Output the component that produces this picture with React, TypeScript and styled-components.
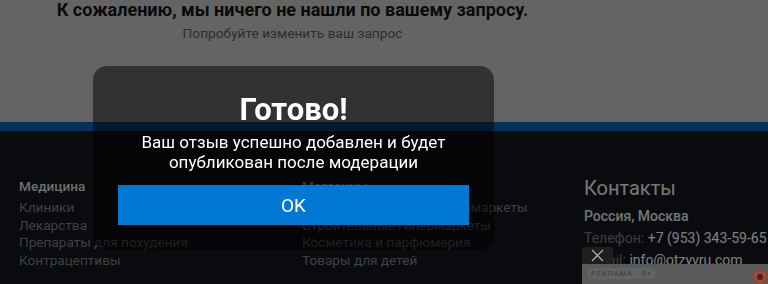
import styled, { createGlobalStyle } from "styled-components";

const GlobalStyle = createGlobalStyle`
  html, body {
    margin: 0;
    padding: 0;
    width: 768px;
    height: 284px;
    overflow: hidden;
    font-family: Roboto, "Liberation Sans", Arial, sans-serif;
    background: #c8c8c8;
  }
`;

const footerColumns = [
  {
    title: "Медицина",
    links: ["Клиники", "Лекарства", "Препараты для похудения", "Контрацептивы"],
  },
  {
    title: "Магазины",
    links: [
      "Продуктовые сети и супермаркеты",
      "Строительные гипермаркеты",
      "Косметика и парфюмерия",
      "Товары для детей",
    ],
  },
];

const App = () => {
  return (
    <>
      <GlobalStyle />
      <Page>
        <Results>
          <EmptyTitle>К сожалению, мы ничего не нашли по вашему запросу.</EmptyTitle>
          <EmptyHint>Попробуйте изменить ваш запрос</EmptyHint>
        </Results>
        <Stripe />
        <Footer>
          {footerColumns.map((col) => (
            <FooterColumn key={col.title}>
              <ColumnTitle>{col.title}</ColumnTitle>
              {col.links.map((link) => (
                <FooterLink key={link}>{link}</FooterLink>
              ))}
            </FooterColumn>
          ))}
          <FooterColumn>
            <ContactsTitle>Контакты</ContactsTitle>
            <City>Россия, Москва</City>
            <ContactRow>
              <ContactLabel>Телефон:</ContactLabel> +7 (953) 343-59-65
            </ContactRow>
            <ContactRow>
              <ContactLabel>E-mail:</ContactLabel> info@otzyvru.com
            </ContactRow>
          </FooterColumn>
        </Footer>
      </Page>

      <Overlay />

      <AdWidget>
        <AdClose>
          <svg width="13" height="13" viewBox="0 0 13 13">
            <path d="M1 1L12 12M12 1L1 12" stroke="#a8a8a8" strokeWidth="1.4" />
          </svg>
        </AdClose>
        <AdPanel>
          <AdLabel>РЕКЛАМА · 0+</AdLabel>
          <AdIcon />
        </AdPanel>
      </AdWidget>

      <Modal>
        <ModalTitle>Готово!</ModalTitle>
        <ModalText>
          Ваш отзыв успешно добавлен и будет
          <br />
          опубликован после модерации
        </ModalText>
        <OkButton>OK</OkButton>
      </Modal>
    </>
  );
};

const Page = styled.div`
  width: 768px;
  height: 284px;
  display: flex;
  flex-direction: column;
`;

const Results = styled.section`
  width: 585px;
  height: 122px;
  display: flex;
  flex-direction: column;
  align-items: center;
`;

const EmptyTitle = styled.h2`
  margin: 0;
  font-size: 18px;
  line-height: 20px;
  font-weight: 700;
  color: #151515;
`;

const EmptyHint = styled.p`
  margin: 3px 0 0;
  font-size: 13.7px;
  line-height: 20px;
  color: #5c5c5c;
`;

const Stripe = styled.div`
  height: 9px;
  background: #0064b4;
`;

const Footer = styled.footer`
  flex: 1;
  background: #14161e;
  display: grid;
  grid-template-columns: 283px 282px 1fr;
  padding: 45px 0 0 19px;
`;

const FooterColumn = styled.div`
  display: flex;
  flex-direction: column;
  white-space: nowrap;
`;

const ColumnTitle = styled.div`
  font-size: 13.6px;
  line-height: 20px;
  font-weight: 500;
  color: #dcdcdc;
  margin-bottom: 3px;
`;

const FooterLink = styled.a`
  font-size: 13.6px;
  line-height: 17.7px;
  color: #808080;
`;

const ContactsTitle = styled.div`
  font-size: 20px;
  line-height: 24px;
  color: #f0f0f0;
`;

const City = styled.div`
  margin-top: 5px;
  font-size: 14px;
  line-height: 22px;
  font-weight: 500;
  color: #e8e8e8;
`;

const ContactRow = styled.div`
  font-size: 14px;
  line-height: 22px;
  color: #fff;
`;

const ContactLabel = styled.span`
  color: #7a7a7a;
`;

const Overlay = styled.div`
  position: fixed;
  inset: 0;
  background: rgba(0, 0, 0, 0.5);
`;

const AdWidget = styled.div`
  position: fixed;
  left: 582px;
  right: 0;
  top: 247px;
  bottom: 0;
  display: flex;
  flex-direction: column;
`;

const AdClose = styled.button`
  width: 31px;
  height: 17px;
  border: 0;
  padding: 0;
  border-radius: 3px 3px 0 0;
  background: #1e1e1e;
  display: flex;
  align-items: center;
  justify-content: center;
`;

const AdPanel = styled.div`
  flex: 1;
  background: #5a5a5a;
  display: flex;
  align-items: flex-start;
  justify-content: space-between;
  padding: 4px 0 0 5px;
`;

const AdLabel = styled.span`
  font-size: 7.5px;
  line-height: 11px;
  letter-spacing: 0.9px;
  padding: 0 4px;
  border-radius: 6px;
  background: #636363;
  color: #3a3a3a;
`;

const AdIcon = styled.span`
  width: 14px;
  height: 14px;
  margin: 2px 1px 0 0;
  border-radius: 50%;
  background: #a04a36;
  box-shadow: inset 0 0 0 4px #a04a36, inset 0 0 0 7px #3a2a28;
`;

const Modal = styled.div`
  position: fixed;
  left: 93px;
  top: 66px;
  width: 401px;
  box-sizing: border-box;
  padding: 25px 25px 25px;
  border-radius: 14px;
  background: rgba(0, 0, 0, 0.5);
  display: flex;
  flex-direction: column;
  align-items: center;
  text-align: center;
  color: #fff;
`;

const ModalTitle = styled.h1`
  margin: 0;
  font-size: 31px;
  line-height: 38px;
  font-weight: 700;
`;

const ModalText = styled.p`
  margin: 4px 0 0;
  font-size: 17px;
  line-height: 19.5px;
`;

const OkButton = styled.button`
  margin-top: 13px;
  width: 100%;
  height: 40px;
  border: 0;
  background: #0078d4;
  color: #fff;
  font-family: inherit;
  font-size: 19px;
`;

export default App;
